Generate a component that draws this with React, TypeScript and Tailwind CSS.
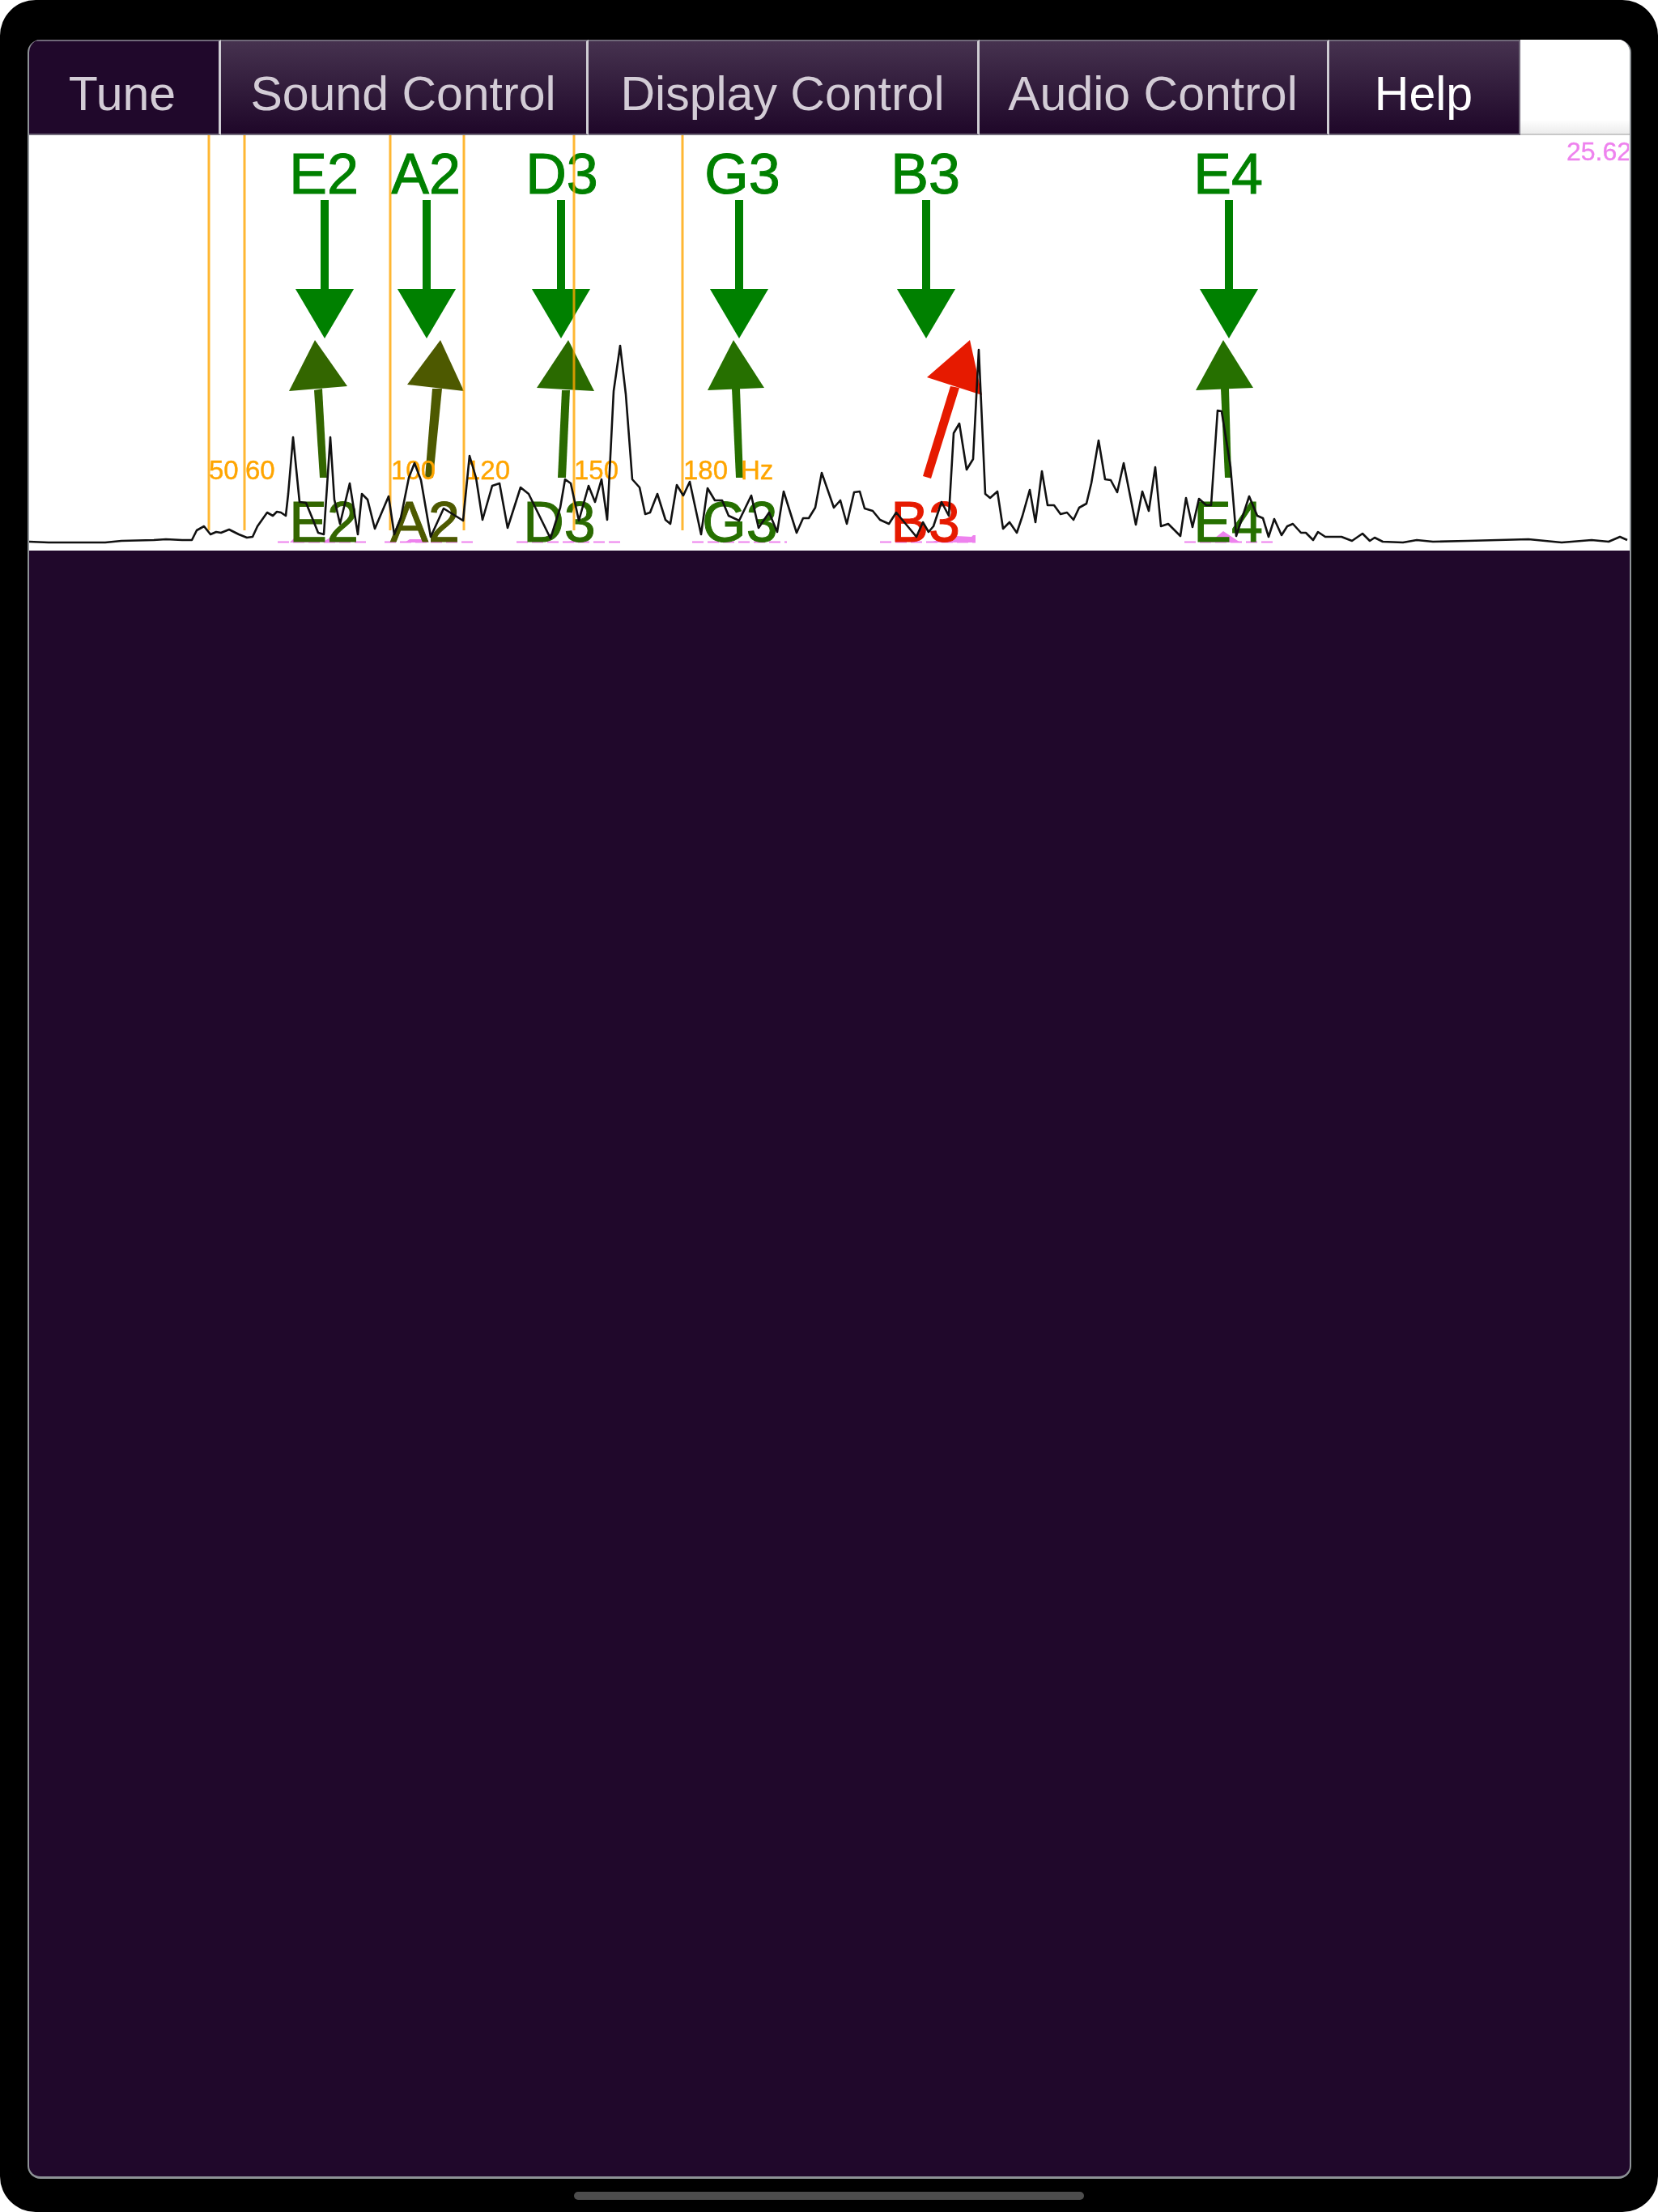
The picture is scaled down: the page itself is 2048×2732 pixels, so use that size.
const tabs = [
  { label: "Tune", cls: "w-[237px] pr-[3px] bg-[#20082b] text-[#d3ccd6] border-r-[3px] border-r-[#cfcdd3]" },
  { label: "Sound Control", cls: "w-[454px] bg-gradient-to-b from-[#46324f] to-[#1f0729] text-[#d3ccd6] border-r-[3px] border-r-[#cfcdd3]" },
  { label: "Display Control", cls: "w-[483px] bg-gradient-to-b from-[#46324f] to-[#1f0729] text-[#d3ccd6] border-r-[3px] border-r-[#cfcdd3]" },
  { label: "Audio Control", cls: "w-[432px] bg-gradient-to-b from-[#46324f] to-[#1f0729] text-[#d3ccd6] border-r-[3px] border-r-[#cfcdd3]" },
  { label: "Help", cls: "w-[236px] bg-gradient-to-b from-[#46324f] to-[#1f0729] text-white border-r-2 border-r-[#6f6878]" },
]

const spectrum =
  "36,669 60,670 100,670 130,670 150,668 190,667 205,666 225,667 237,667 243,655 252,650 260,660 267,657 273,658 283,654 295,660 305,664 312,663 318,650 330,633 337,637 342,632 347,633 353,637 356,610 362,540 369,610 370,620 378,621 387,643 393,658 400,660 408,540 413,617 420,647 432,597 442,660 447,610 454,617 463,653 480,613 487,660 495,640 505,590 512,572 520,593 532,663 548,628 572,643 580,563 588,590 596,642 608,600 617,597 627,652 643,602 653,610 680,665 692,627 698,592 705,597 710,620 715,643 727,600 735,620 743,592 750,642 758,483 766,427 773,487 781,592 790,602 797,635 803,633 812,610 822,642 828,647 836,599 844,612 852,595 866,660 874,603 883,618 892,618 900,637 913,643 928,612 937,652 950,633 960,657 968,607 984,658 992,640 999,640 1007,627 1015,584 1030,627 1038,618 1046,647 1055,608 1062,607 1068,628 1078,631 1087,642 1098,647 1107,633 1132,663 1140,645 1147,657 1153,650 1163,620 1172,637 1178,535 1185,523 1194,580 1202,567 1209,432 1217,610 1223,615 1232,607 1239,653 1247,645 1256,658 1263,637 1272,605 1279,645 1287,582 1294,624 1302,624 1310,635 1318,633 1326,642 1333,627 1342,622 1348,597 1357,544 1365,592 1372,593 1380,608 1388,572 1403,648 1411,607 1419,631 1427,577 1434,650 1443,647 1458,662 1465,615 1473,651 1481,616 1490,624 1496,624 1504,507 1509,508 1520,577 1527,662 1543,613 1553,637 1560,640 1567,663 1574,641 1583,661 1590,650 1597,647 1607,658 1613,658 1622,667 1628,657 1637,663 1657,663 1670,668 1683,659 1692,668 1698,664 1708,669 1733,670 1750,667 1770,669 1813,668 1888,666 1929,670 1966,667 1987,669 2001,663 2010,667"

const pinkDashes = [
  [343, 455],
  [475, 586],
  [638, 770],
  [855, 972],
  [1087, 1205],
  [1463, 1577],
]

const pinkBlobs = [
  "358,670 364,664 376,666 382,670",
  "398,670 406,665 425,665 432,670",
  "500,670 506,666 522,666 530,670",
  "700,670 712,666 722,670",
  "1150,670 1160,666 1178,666 1182,662 1200,663 1202,661 1205,661 1205,670",
  "1490,670 1500,665 1511,656 1520,662 1532,670",
]

const vlines = [258, 302, 482, 573, 709, 843]

const hzLabels = [
  { t: "50", x: 258 },
  { t: "60", x: 303 },
  { t: "100", x: 483 },
  { t: "120", x: 575 },
  { t: "150", x: 709 },
  { t: "180", x: 844 },
  { t: "Hz", x: 915 },
]

const notes = [
  { t: "E2", topX: 400, downX: 401, botX: 400, color: "#336600", head: "389,420 357,483 429,477", shaft: "388,482 398,480 404,590 395,590" },
  { t: "A2", topX: 526, downX: 527, botX: 525, color: "#4d5900", head: "544,420 503,475 573,483", shaft: "534,480 546,480 535,590 525,590" },
  { t: "D3", topX: 694, downX: 693, botX: 691, color: "#2a6a00", head: "702,420 663,479 734,483", shaft: "694,482 704,482 699,590 689,590" },
  { t: "G3", topX: 917, downX: 913, botX: 914, color: "#267000", head: "906,420 874,482 944,479", shaft: "904,480 914,480 918,590 909,590" },
  { t: "B3", topX: 1143, downX: 1144, botX: 1143, color: "#e61a00", head: "1198,420 1145,466 1213,488", shaft: "1174,477 1185,479 1150,591 1140,588" },
  { t: "E4", topX: 1517, downX: 1518, botX: 1517, color: "#267000", head: "1511,420 1477,482 1548,479", shaft: "1508,480 1518,480 1521,590 1513,590" },
]

function TunerChart() {
  return (
    <svg
      viewBox="36 167 1976 513"
      width={1976}
      height={513}
      className="block shrink-0 blur-[0.6px] font-['Liberation_Sans',Arial,sans-serif]"
    >
      {pinkDashes.map(([a, b]) => (
        <line key={a} x1={a} x2={b} y1={669.5} y2={669.5} stroke="#ee82ee" strokeWidth={2} strokeDasharray="14 5" />
      ))}
      {pinkBlobs.map((p) => (
        <polygon key={p} points={p} fill="#ee82ee" />
      ))}

      {notes.map((n) => (
        <g key={n.t}>
          <text x={n.topX} y={239} fontSize={70} textAnchor="middle" fill="#008000" stroke="#008000" strokeWidth={1}>
            {n.t}
          </text>
          <rect x={n.downX - 5} y={247} width={10} height={112} fill="#008000" />
          <polygon
            points={`${n.downX - 36},357 ${n.downX + 36},357 ${n.downX},418`}
            fill="#008000"
          />
          <polygon points={n.head} fill={n.color} />
          <polygon points={n.shaft} fill={n.color} />
          <text x={n.botX} y={669} fontSize={70} textAnchor="middle" fill={n.color} stroke={n.color} strokeWidth={1}>
            {n.t}
          </text>
        </g>
      ))}

      {vlines.map((x) => (
        <line key={x} x1={x} x2={x} y1={167} y2={655} stroke="#ffa500" strokeOpacity={0.8} strokeWidth={3} />
      ))}

      {hzLabels.map((l) => (
        <text key={l.t} x={l.x} y={592} fontSize={33} fill="#ffa500" stroke="#ffa500" strokeWidth={0.4}>
          {l.t}
        </text>
      ))}

      <text x={1935} y={198} fontSize={32} fill="#ee82ee" stroke="#ee82ee" strokeWidth={0.4}>
        25.62
      </text>

      <polyline points={spectrum} fill="none" stroke="#111111" strokeWidth={2.6} strokeLinejoin="round" />
    </svg>
  )
}

export default function App() {
  return (
    <div className="bg-white w-[2048px] h-[2732px] font-['Liberation_Sans',Arial,sans-serif]">
      <div className="flex h-full flex-col items-center rounded-[44px] bg-black pt-[49px]">
        <div className="flex h-[2642px] w-[1981px] flex-col overflow-hidden rounded-[16px] border-x-2 border-b-[3px] border-x-[#8d9296] border-b-[#8d9296] bg-[#20082b]">
          <div className="flex h-[118px] shrink-0 bg-white">
            {tabs.map((tab) => (
              <div
                key={tab.label}
                className={`flex items-center justify-center border-y-2 border-y-[#6f6878] pt-[16px] text-[59px] leading-none ${tab.cls}`}
              >
                {tab.label}
              </div>
            ))}
            <div className="flex-1 border-b-2 border-b-[#c8c8c8] bg-gradient-to-b from-white from-[85%] to-[#ececec]" />
          </div>
          <div className="bg-white">
            <TunerChart />
          </div>
          <div className="flex-1" />
        </div>
        <div className="mt-[16px] h-[10px] w-[630px] rounded-[5px] bg-[#4d4d4d]" />
      </div>
    </div>
  )
}
